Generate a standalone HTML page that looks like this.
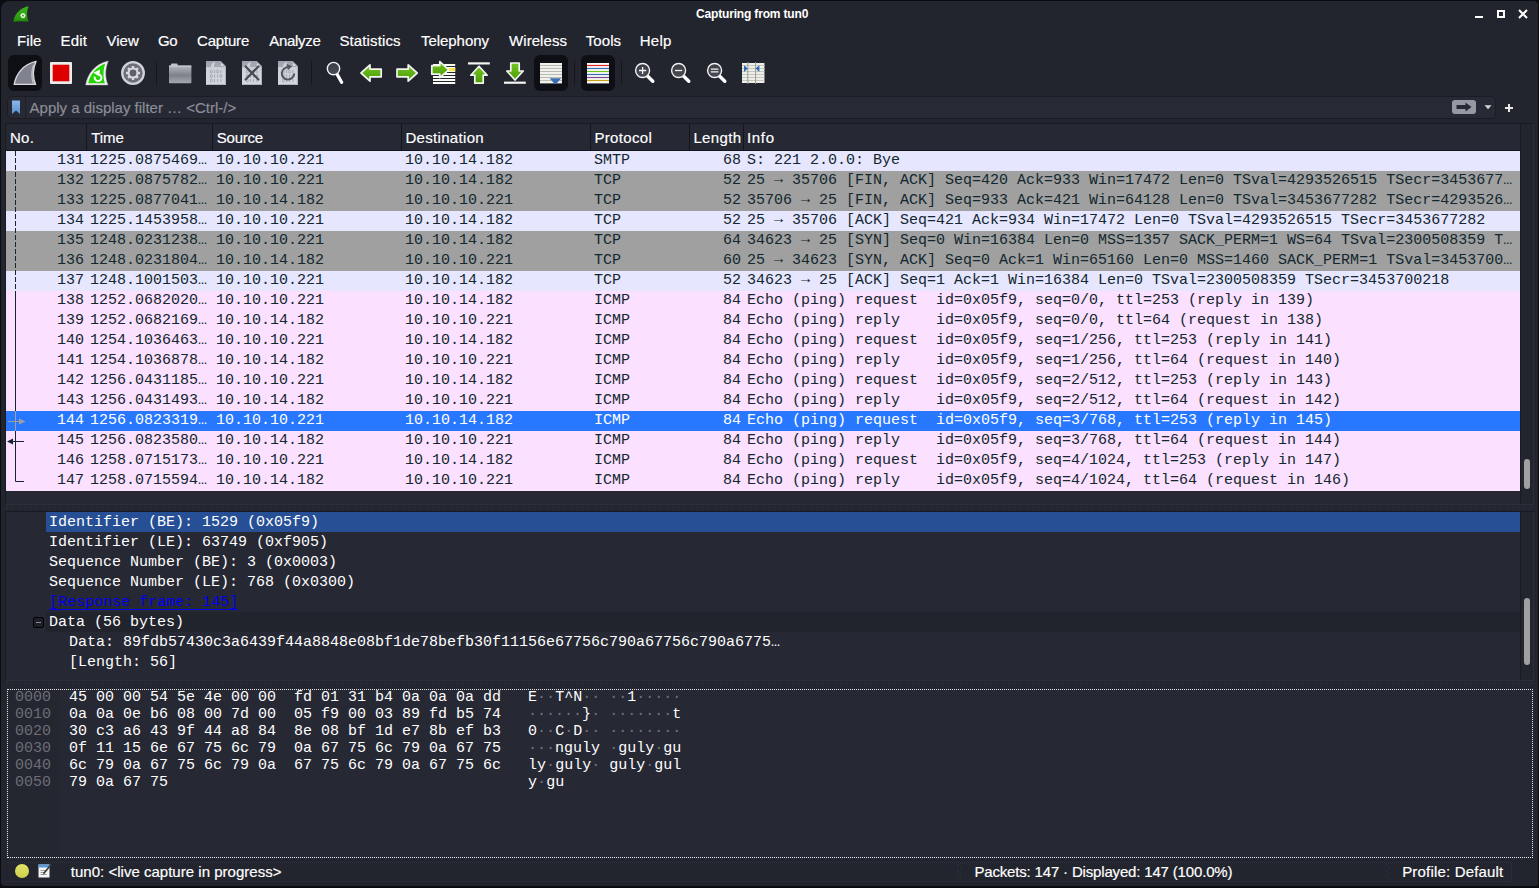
<!DOCTYPE html>
<html><head><meta charset="utf-8"><title>Capturing from tun0</title>
<style>
html,body{margin:0;padding:0;background:#0b0c10;}
body{width:1539px;height:888px;position:relative;overflow:hidden;font-family:"Liberation Sans",sans-serif;}
#win{position:absolute;left:1px;top:1px;width:1536.5px;height:885px;background:#23252e;border-radius:8px 4px 2px 4px;}
.abs{position:absolute;}
#title{-webkit-text-stroke:0 !important;}
.st{position:absolute;white-space:pre;line-height:20px;height:20px;-webkit-text-stroke:0.18px currentColor;}
.mono{font-family:"Liberation Mono",monospace;font-size:15px;white-space:pre;}
/* packet list */
#plist{position:absolute;left:6px;top:124px;width:1514px;height:381px;background:#262834;}
.row{position:absolute;left:6px;width:1514px;height:20px;line-height:20px;font-family:"Liberation Mono",monospace;font-size:15px;white-space:pre;color:#12272e;}
.row .c{position:absolute;top:0;}
.row .no{left:0;width:78px;text-align:right;}
.row .len{left:684px;width:51px;text-align:right;}
.ar{font-weight:normal;position:relative;top:-1px;}
.tcp{background:#e7e6ff;}
.gray{background:#a0a0a0;}
.icmp{background:#fce0ff;}
.sel{background:#2777ff;color:#ffffff;}
.drow{position:absolute;left:46px;width:1471px;padding-left:3px;height:20px;line-height:22px;font-family:"Liberation Mono",monospace;font-size:15px;white-space:pre;color:#ffffff;}
.hrow{position:absolute;left:0;height:17px;line-height:17px;font-family:"Liberation Mono",monospace;font-size:15px;white-space:pre;color:#ffffff;}
.hrow i{font-style:normal;color:#70727b;}
.sep{position:absolute;top:61px;width:1px;height:24px;background:#15161c;}
.pressed{position:absolute;top:55px;width:34px;height:36px;border-radius:6px;background:#0e0f14;}
</style></head><body>
<div id="win"></div>

<!-- title bar -->
<svg class="abs" style="left:13px;top:6px" width="17" height="17" viewBox="0 0 17 17">
 <defs><linearGradient id="fing" x1="0" y1="0" x2="0" y2="1"><stop offset="0" stop-color="#3cb418"/><stop offset="0.8" stop-color="#2c9a10"/><stop offset="1" stop-color="#1d7a08"/></linearGradient></defs>
 <path d="M0.3 15.8 C1.5 8 7 2 15.6 0.3 C13.5 5 13.5 11 15.6 15.8 Q8 14.6 0.3 15.8 Z" fill="url(#fing)"/>
 <g fill="#eaf6e4"><circle cx="10" cy="7.9" r="1"/><circle cx="10" cy="11.3" r="1"/><circle cx="8.3" cy="9.6" r="1"/><circle cx="11.7" cy="9.6" r="1"/><circle cx="8.8" cy="8.4" r="0.9"/><circle cx="11.2" cy="8.4" r="0.9"/><circle cx="8.8" cy="10.8" r="0.9"/><circle cx="11.2" cy="10.8" r="0.9"/></g>
 <circle cx="10" cy="9.6" r="0.8" fill="#3a9a20"/>
</svg>
<!-- window buttons -->
<div class="abs" style="left:1475px;top:16px;width:8px;height:2px;background:#fff"></div>
<div class="abs" style="left:1497px;top:10px;width:4px;height:4px;border:2px solid #fff"></div>
<svg class="abs" style="left:1518px;top:9px" width="10" height="10" viewBox="0 0 10 10"><path d="M1 1 L9 9 M9 1 L1 9" stroke="#fff" stroke-width="2" fill="none"/></svg>


<!-- toolbar -->
<div class="pressed" style="left:8px"></div>
<div class="pressed" style="left:534px"></div>
<div class="pressed" style="left:581px"></div>
<div class="sep" style="left:156px"></div>
<div class="sep" style="left:311px"></div>
<div class="sep" style="left:574px"></div>
<div class="sep" style="left:621px"></div>
<svg class="abs" style="left:0;top:52px" width="780" height="44" viewBox="0 52 780 44">
<defs>
 <linearGradient id="gArrow" x1="0" y1="0" x2="0" y2="1"><stop offset="0" stop-color="#74c422"/><stop offset="1" stop-color="#4a9c06"/></linearGradient>
 <linearGradient id="gFolder" x1="0" y1="0" x2="0" y2="1"><stop offset="0" stop-color="#b8bbc4"/><stop offset="0.12" stop-color="#a9acb5"/><stop offset="0.55" stop-color="#7e818a"/><stop offset="1" stop-color="#a6a9b2"/></linearGradient>
 <linearGradient id="gDoc" x1="0" y1="0" x2="0" y2="1"><stop offset="0" stop-color="#b4b7c0"/><stop offset="0.3" stop-color="#cdd0d7"/><stop offset="1" stop-color="#d6d8de"/></linearGradient>
 <linearGradient id="gLens" x1="0" y1="0" x2="0" y2="1"><stop offset="0" stop-color="#3a3c46"/><stop offset="1" stop-color="#4a4c56"/></linearGradient>
 <g id="doc">
  <path d="M0 0 H14.5 L20 5.5 V24 H0 Z" fill="url(#gDoc)"/>
  <path d="M0 0 H14.5 L20 5.5 V6 H0 Z" fill="#9a9da7" opacity="0.75"/>
  <path d="M14.5 0 L20 5.5 H14.5 Z" fill="#a9acb5"/><path d="M15.2 2.2 L17.8 4.8 H15.2 Z" fill="#eeeff2"/><path d="M19.5 6 V23.5 H0.5" stroke="#a6a9b2" stroke-width="1" fill="none" opacity="0.8"/>
  <path d="M5 6 Q5 1.5 9.5 1 Q7.5 3 8 6 Z" fill="#cfd1d8"/>
  <g fill="none" stroke="#9fa2ab" stroke-width="0.9">
   <ellipse cx="5.3" cy="10.6" rx="1" ry="1.5"/><path d="M8.6 9 V12.2"/><ellipse cx="11.6" cy="10.6" rx="1" ry="1.5"/><path d="M14.9 9 V12.2"/>
   <ellipse cx="5.3" cy="15.1" rx="1" ry="1.5"/><path d="M8.6 13.5 V16.7 M11.6 13.5 V16.7"/><ellipse cx="14.9" cy="15.1" rx="1" ry="1.5"/>
   <ellipse cx="5.3" cy="19.6" rx="1" ry="1.5"/><path d="M8.6 18 V21.2 M11.6 18 V21.2 M14.9 18 V21.2"/>
  </g>
 </g>
 <g id="mag">
  <path d="M4.6 5.2 L10.2 10.8" stroke="#ffffff" stroke-width="3.4" stroke-linecap="round"/>
  <circle cx="0" cy="0" r="7" fill="url(#gLens)" stroke="#f2f2f2" stroke-width="1.4"/>
 </g>
</defs>
<!-- shark fin (start) -->
<path d="M14.2 84.4 C16 74.5 22.5 64.5 36 61.4 C32.8 68.5 32.6 77 35.6 84.4 Z" fill="#80838f" stroke="#dadbe0" stroke-width="1.4" stroke-linejoin="round"/>
<path d="M33.4 65 C31.3 71 31.3 77.5 33.2 83.6" stroke="#d2d3d9" stroke-width="0.9" fill="none"/><path d="M33.4 65 C31.3 71 31.3 77.5 33.2 83.6 L34.8 83.6 C32.4 77 32.6 70 35 63 Z" fill="#c0c2c9" opacity="0.6"/>
<!-- stop -->
<rect x="50" y="62" width="22" height="22" rx="1" fill="#ececec"/>
<rect x="52.7" y="64.7" width="16.6" height="16.6" fill="#dc0000"/>
<!-- restart fin -->
<path d="M85.7 84.9 C87.5 74.5 94.4 64 108.3 61 C105 68.5 104.8 77.5 107.9 84.9 Z" fill="#f2f2f2" stroke="#b9bbc0" stroke-width="0.5" stroke-linejoin="round"/>
<path d="M88.2 83.2 C90.2 75 95.6 67.2 105.3 63.6 C103.1 69.6 102.9 77.4 104.9 83.2 Z" fill="#22d400"/>
<path d="M99.3 74.5 A3.4 3.4 0 1 1 94.8 76.6" stroke="#f8fcf6" stroke-width="2" fill="none"/>
<path d="M93.2 72.8 L100 69.6 L99.4 76.4 Z" fill="#f8fcf6"/>
<!-- options gear -->
<circle cx="133" cy="73" r="10.8" fill="#6c6f79" stroke="#d0d2d8" stroke-width="2.3"/>
<g transform="translate(133 73)" fill="#d9dade">
 <circle r="5.5"/>
 <g id="teeth"><rect x="-1.2" y="-7" width="2.4" height="2.4"/><rect x="-1.2" y="4.6" width="2.4" height="2.4"/></g>
 <use href="#teeth" transform="rotate(45)"/><use href="#teeth" transform="rotate(90)"/><use href="#teeth" transform="rotate(135)"/>
 <circle r="3.4" fill="#5c5f69"/>
</g>
<!-- open folder -->
<path d="M171 66 V64.6 Q171 63.6 172 63.6 H176.6 Q177.4 63.6 177.6 64.4 L178 66 Z" fill="#c2c4cc"/>
<rect x="169" y="65.6" width="22.4" height="17.6" rx="0.8" fill="url(#gFolder)"/>
<rect x="169" y="65.6" width="22.4" height="1.2" fill="#c6c8cf"/>
<!-- docs -->
<use href="#doc" x="206" y="61"/>
<use href="#doc" x="242" y="61"/>
<path d="M245.6 66.4 L258.4 79.6 M258.4 66.4 L245.6 79.6" stroke="#474a54" stroke-width="2.1" stroke-linecap="round"/>
<use href="#doc" x="278" y="61"/>
<path d="M288.6 67.2 A6.2 6.2 0 1 0 294.2 73.4" stroke="#545761" stroke-width="2" fill="none"/>
<path d="M286.8 64 L292.2 66.2 L287.8 70.2 Z" fill="#545761"/>
<!-- find -->
<path d="M337.4 74.8 L341.6 82.2" stroke="#ffffff" stroke-width="3.3" stroke-linecap="round"/><circle cx="333.5" cy="68.6" r="6.2" fill="url(#gLens)" stroke="#f2f2f2" stroke-width="1.4"/>
<!-- back / forward -->
<path d="M361 73 L370 64.8 V69.2 H381.2 V76.8 H370 V81.2 Z" fill="url(#gArrow)" stroke="#f4f4f0" stroke-width="1.7" stroke-linejoin="round"/>
<path d="M417.2 73 L408.2 64.8 V69.2 H397 V76.8 H408.2 V81.2 Z" fill="url(#gArrow)" stroke="#f4f4f0" stroke-width="1.7" stroke-linejoin="round"/>
<!-- go to packet -->
<g fill="#fbfbf8">
 <rect x="433" y="64" width="22.2" height="2"/><rect x="433" y="67" width="22.2" height="5"/><rect x="433" y="73" width="22.2" height="2"/>
 <rect x="433" y="76" width="22.2" height="2"/><rect x="433" y="79" width="22.2" height="2"/><rect x="433" y="82" width="22.2" height="2"/>
</g>
<rect x="447" y="68" width="8.2" height="3.2" fill="#fce348"/>
<path d="M431.8 65.6 H439.8 V61.6 L448.8 69.8 L439.8 77.6 V74.2 H431.8 Z" fill="url(#gArrow)" stroke="#f4f4f0" stroke-width="1.7" stroke-linejoin="round"/>
<!-- first packet -->
<rect x="468" y="62.3" width="21.8" height="2.2" fill="#f4f4f0"/>
<path d="M479 66.2 L487.2 75.2 H483.2 V83.2 H474.8 V75.2 H470.8 Z" fill="url(#gArrow)" stroke="#f4f4f0" stroke-width="1.7" stroke-linejoin="round"/>
<!-- last packet -->
<rect x="504" y="81.6" width="21.8" height="2.2" fill="#f4f4f0"/>
<path d="M515 80 L523.2 71 H519.2 V63 H510.8 V71 H506.8 Z" fill="url(#gArrow)" stroke="#f4f4f0" stroke-width="1.7" stroke-linejoin="round"/>
<!-- autoscroll -->
<rect x="540" y="63" width="22" height="20.4" fill="#f1f1ec"/>
<path d="M540 65.5 H562 M540 68.5 H562 M540 71.5 H562 M540 74.5 H562 M540 77.5 H562 M540 80.5 H562" stroke="#b9bab2" stroke-width="1"/>
<path d="M549.6 78.3 H561.2 L556.8 83.3 Q555.4 84.5 554 83.3 Z" fill="#3a6cb4"/>
<!-- colorize -->
<rect x="587" y="63" width="22" height="20.4" fill="#fbfbfa"/>
<path d="M587 65.5 H609" stroke="#e02828" stroke-width="1.2"/>
<path d="M587 68.5 H609" stroke="#3a6cb4" stroke-width="1.2"/>
<path d="M587 71.5 H609" stroke="#72c020" stroke-width="1.2"/>
<path d="M587 74.5 H609" stroke="#3a6cb4" stroke-width="1.2"/>
<path d="M587 77.5 H609" stroke="#7a4a8c" stroke-width="1.2"/>
<path d="M587 80.5 H609" stroke="#c8a010" stroke-width="1.2"/>
<!-- zoom in/out/100 -->
<g transform="translate(642.6 70.5)"><use href="#mag"/><path d="M-3.6 0 H3.6 M0 -3.6 V3.6" stroke="#f4f4f4" stroke-width="1.3"/></g>
<g transform="translate(678.6 70.5)"><use href="#mag"/><path d="M-3.6 0 H3.6" stroke="#f4f4f4" stroke-width="1.3"/></g>
<g transform="translate(714.6 70.5)"><use href="#mag"/><path d="M-3.8 -1.4 H3.8 M-3.8 1.4 H3.8" stroke="#f4f4f4" stroke-width="1.1"/></g>
<!-- resize columns -->
<rect x="742" y="63" width="22.4" height="20" fill="#efefea"/>
<path d="M742 65.5 H764.4 M742 68.5 H764.4 M742 71.5 H764.4 M742 74.5 H764.4 M742 77.5 H764.4 M742 80.5 H764.4" stroke="#c4c5bd" stroke-width="1"/>
<path d="M747.8 62 V84 M755.6 62 V84" stroke="#9a9b93" stroke-width="1"/>
<path d="M744 65.2 L747.8 68.6 L744 72 Z" fill="#2f6ab8"/>
<path d="M759.4 65.2 L755.6 68.6 L759.4 72 Z" fill="#2f6ab8"/>
</svg>


<!-- filter bar -->
<div class="abs" style="left:7px;top:96px;width:1487px;height:21px;background:#272935;border:1px solid #1b1c24;border-radius:5px"></div>
<div class="abs" style="left:25px;top:97px;width:1px;height:21px;background:#1f2029"></div>
<svg class="abs" style="left:11px;top:100px" width="10" height="15" viewBox="0 0 10 15">
 <defs><linearGradient id="bmk" x1="0" y1="0" x2="0" y2="1"><stop offset="0" stop-color="#8db8ea"/><stop offset="1" stop-color="#5a90d0"/></linearGradient></defs>
 <path d="M1 0.5 H9 V14 L5 10.5 L1 14 Z" fill="url(#bmk)"/></svg>
<div class="abs" style="left:1452px;top:100px;width:24px;height:14px;border-radius:3px;background:#9698a2"></div>
<svg class="abs" style="left:1455px;top:101px" width="18" height="12" viewBox="0 0 18 12"><path d="M1.5 4 H10.5 V1.5 L16.5 6 L10.5 10.5 V8 H1.5 Z" fill="#262834"/></svg>
<svg class="abs" style="left:1484px;top:105px" width="8" height="5" viewBox="0 0 8 5"><path d="M0.5 0.3 H7.5 L4 4.3 Z" fill="#d6d6cf"/></svg>
<div class="abs" style="left:1505px;top:107px;width:8px;height:2px;background:#e8e8e8"></div>
<div class="abs" style="left:1508px;top:104px;width:2px;height:8px;background:#e8e8e8"></div>

<!-- packet list frame -->
<div class="abs" style="left:5px;top:123px;width:1529px;height:382px;background:#1a1b22"></div><div class="abs" style="left:6px;top:504px;width:1528px;height:1px;background:#2c2e3b"></div><div class="abs" style="left:1533px;top:124px;width:1px;height:381px;background:#2c2e3b"></div>
<div class="abs" style="left:6px;top:124px;width:1514px;height:380px;background:#262834"></div>
<div class="abs" style="left:1521px;top:124px;width:12px;height:380px;background:#23252e"></div>
<div class="abs" style="left:6px;top:150px;width:1514px;height:1px;background:#15161c"></div>
<div class="abs" style="left:86px;top:124px;width:1px;height:26px;background:#15161c"></div>
<div class="abs" style="left:212px;top:124px;width:1px;height:26px;background:#15161c"></div>
<div class="abs" style="left:401px;top:124px;width:1px;height:26px;background:#15161c"></div>
<div class="abs" style="left:590px;top:124px;width:1px;height:26px;background:#15161c"></div>
<div class="abs" style="left:689px;top:124px;width:1px;height:26px;background:#15161c"></div>
<div class="abs" style="left:743px;top:124px;width:1px;height:26px;background:#15161c"></div>
<div class="row tcp" style="top:151px"><span class="c no">131</span><span class="c" style="left:84px">1225.0875469…</span><span class="c" style="left:210px">10.10.10.221</span><span class="c" style="left:399px">10.10.14.182</span><span class="c" style="left:588px">SMTP</span><span class="c len">68</span><span class="c" style="left:741px">S: 221 2.0.0: Bye</span></div>
<div class="row gray" style="top:171px"><span class="c no">132</span><span class="c" style="left:84px">1225.0875782…</span><span class="c" style="left:210px">10.10.10.221</span><span class="c" style="left:399px">10.10.14.182</span><span class="c" style="left:588px">TCP</span><span class="c len">52</span><span class="c" style="left:741px">25 <b class="ar">→</b> 35706 [FIN, ACK] Seq=420 Ack=933 Win=17472 Len=0 TSval=4293526515 TSecr=3453677…</span></div>
<div class="row gray" style="top:191px"><span class="c no">133</span><span class="c" style="left:84px">1225.0877041…</span><span class="c" style="left:210px">10.10.14.182</span><span class="c" style="left:399px">10.10.10.221</span><span class="c" style="left:588px">TCP</span><span class="c len">52</span><span class="c" style="left:741px">35706 <b class="ar">→</b> 25 [FIN, ACK] Seq=933 Ack=421 Win=64128 Len=0 TSval=3453677282 TSecr=4293526…</span></div>
<div class="row tcp" style="top:211px"><span class="c no">134</span><span class="c" style="left:84px">1225.1453958…</span><span class="c" style="left:210px">10.10.10.221</span><span class="c" style="left:399px">10.10.14.182</span><span class="c" style="left:588px">TCP</span><span class="c len">52</span><span class="c" style="left:741px">25 <b class="ar">→</b> 35706 [ACK] Seq=421 Ack=934 Win=17472 Len=0 TSval=4293526515 TSecr=3453677282</span></div>
<div class="row gray" style="top:231px"><span class="c no">135</span><span class="c" style="left:84px">1248.0231238…</span><span class="c" style="left:210px">10.10.10.221</span><span class="c" style="left:399px">10.10.14.182</span><span class="c" style="left:588px">TCP</span><span class="c len">64</span><span class="c" style="left:741px">34623 <b class="ar">→</b> 25 [SYN] Seq=0 Win=16384 Len=0 MSS=1357 SACK_PERM=1 WS=64 TSval=2300508359 T…</span></div>
<div class="row gray" style="top:251px"><span class="c no">136</span><span class="c" style="left:84px">1248.0231804…</span><span class="c" style="left:210px">10.10.14.182</span><span class="c" style="left:399px">10.10.10.221</span><span class="c" style="left:588px">TCP</span><span class="c len">60</span><span class="c" style="left:741px">25 <b class="ar">→</b> 34623 [SYN, ACK] Seq=0 Ack=1 Win=65160 Len=0 MSS=1460 SACK_PERM=1 TSval=3453700…</span></div>
<div class="row tcp" style="top:271px"><span class="c no">137</span><span class="c" style="left:84px">1248.1001503…</span><span class="c" style="left:210px">10.10.10.221</span><span class="c" style="left:399px">10.10.14.182</span><span class="c" style="left:588px">TCP</span><span class="c len">52</span><span class="c" style="left:741px">34623 <b class="ar">→</b> 25 [ACK] Seq=1 Ack=1 Win=16384 Len=0 TSval=2300508359 TSecr=3453700218</span></div>
<div class="row icmp" style="top:291px"><span class="c no">138</span><span class="c" style="left:84px">1252.0682020…</span><span class="c" style="left:210px">10.10.10.221</span><span class="c" style="left:399px">10.10.14.182</span><span class="c" style="left:588px">ICMP</span><span class="c len">84</span><span class="c" style="left:741px">Echo (ping) request  id=0x05f9, seq=0/0, ttl=253 (reply in 139)</span></div>
<div class="row icmp" style="top:311px"><span class="c no">139</span><span class="c" style="left:84px">1252.0682169…</span><span class="c" style="left:210px">10.10.14.182</span><span class="c" style="left:399px">10.10.10.221</span><span class="c" style="left:588px">ICMP</span><span class="c len">84</span><span class="c" style="left:741px">Echo (ping) reply    id=0x05f9, seq=0/0, ttl=64 (request in 138)</span></div>
<div class="row icmp" style="top:331px"><span class="c no">140</span><span class="c" style="left:84px">1254.1036463…</span><span class="c" style="left:210px">10.10.10.221</span><span class="c" style="left:399px">10.10.14.182</span><span class="c" style="left:588px">ICMP</span><span class="c len">84</span><span class="c" style="left:741px">Echo (ping) request  id=0x05f9, seq=1/256, ttl=253 (reply in 141)</span></div>
<div class="row icmp" style="top:351px"><span class="c no">141</span><span class="c" style="left:84px">1254.1036878…</span><span class="c" style="left:210px">10.10.14.182</span><span class="c" style="left:399px">10.10.10.221</span><span class="c" style="left:588px">ICMP</span><span class="c len">84</span><span class="c" style="left:741px">Echo (ping) reply    id=0x05f9, seq=1/256, ttl=64 (request in 140)</span></div>
<div class="row icmp" style="top:371px"><span class="c no">142</span><span class="c" style="left:84px">1256.0431185…</span><span class="c" style="left:210px">10.10.10.221</span><span class="c" style="left:399px">10.10.14.182</span><span class="c" style="left:588px">ICMP</span><span class="c len">84</span><span class="c" style="left:741px">Echo (ping) request  id=0x05f9, seq=2/512, ttl=253 (reply in 143)</span></div>
<div class="row icmp" style="top:391px"><span class="c no">143</span><span class="c" style="left:84px">1256.0431493…</span><span class="c" style="left:210px">10.10.14.182</span><span class="c" style="left:399px">10.10.10.221</span><span class="c" style="left:588px">ICMP</span><span class="c len">84</span><span class="c" style="left:741px">Echo (ping) reply    id=0x05f9, seq=2/512, ttl=64 (request in 142)</span></div>
<div class="row sel" style="top:411px"><span class="c no">144</span><span class="c" style="left:84px">1256.0823319…</span><span class="c" style="left:210px">10.10.10.221</span><span class="c" style="left:399px">10.10.14.182</span><span class="c" style="left:588px">ICMP</span><span class="c len">84</span><span class="c" style="left:741px">Echo (ping) request  id=0x05f9, seq=3/768, ttl=253 (reply in 145)</span></div>
<div class="row icmp" style="top:431px"><span class="c no">145</span><span class="c" style="left:84px">1256.0823580…</span><span class="c" style="left:210px">10.10.14.182</span><span class="c" style="left:399px">10.10.10.221</span><span class="c" style="left:588px">ICMP</span><span class="c len">84</span><span class="c" style="left:741px">Echo (ping) reply    id=0x05f9, seq=3/768, ttl=64 (request in 144)</span></div>
<div class="row icmp" style="top:451px"><span class="c no">146</span><span class="c" style="left:84px">1258.0715173…</span><span class="c" style="left:210px">10.10.10.221</span><span class="c" style="left:399px">10.10.14.182</span><span class="c" style="left:588px">ICMP</span><span class="c len">84</span><span class="c" style="left:741px">Echo (ping) request  id=0x05f9, seq=4/1024, ttl=253 (reply in 147)</span></div>
<div class="row icmp" style="top:471px"><span class="c no">147</span><span class="c" style="left:84px">1258.0715594…</span><span class="c" style="left:210px">10.10.14.182</span><span class="c" style="left:399px">10.10.10.221</span><span class="c" style="left:588px">ICMP</span><span class="c len">84</span><span class="c" style="left:741px">Echo (ping) reply    id=0x05f9, seq=4/1024, ttl=64 (request in 146)</span></div>
<!-- related-packet markers -->
<svg class="abs" style="left:6px;top:151px" width="24" height="340" viewBox="0 0 24 340">
 <path d="M9.5 0 V140" stroke="#12272e" stroke-width="1" stroke-dasharray="5 2" fill="none"/>
 <path d="M9.5 140 V260 M9.5 280 V330.5 H18" stroke="#12272e" stroke-width="1" fill="none"/>
 <path d="M9.5 260 V280 M2 270.5 H14" stroke="#a0a0a0" stroke-width="1" fill="none"/>
 <path d="M13 267.5 L19.5 270.5 L13 273.5 Z" fill="#a0a0a0"/>
 <path d="M6 290.5 H18" stroke="#12272e" stroke-width="1" fill="none"/>
 <path d="M7 287.5 L1 290.5 L7 293.5 Z" fill="#12272e"/>
</svg>
<div class="abs" style="left:1524px;top:459px;width:6px;height:30px;border-radius:3px;background:#a0a0a0"></div>

<!-- splitters -->
<svg class="abs" style="left:6px;top:505px" width="1528" height="6"><defs><pattern id="spl" width="6" height="6" patternUnits="userSpaceOnUse"><rect x="0" y="1" width="1" height="1" fill="#30323f"/><rect x="1" y="2" width="1" height="1" fill="#30323f"/><rect x="0" y="4" width="1" height="1" fill="#30323f"/><rect x="3" y="2" width="1" height="1" fill="#2c2e3a"/><rect x="4" y="3" width="1" height="1" fill="#2c2e3a"/></pattern></defs><rect width="1528" height="6" fill="url(#spl)"/></svg>
<svg class="abs" style="left:6px;top:681px" width="1528" height="6"><rect width="1528" height="6" fill="url(#spl)"/></svg>

<!-- details pane -->
<div class="abs" style="left:5px;top:511px;width:1529px;height:170px;background:#1a1b22"></div><div class="abs" style="left:6px;top:680px;width:1528px;height:1px;background:#2c2e3b"></div><div class="abs" style="left:1533px;top:512px;width:1px;height:169px;background:#2c2e3b"></div>
<div class="abs" style="left:6px;top:512px;width:1514px;height:168px;background:#262834"></div>
<div class="abs" style="left:1521px;top:512px;width:12px;height:168px;background:#23252e"></div>
<div class="drow" style="top:512px;background:#264f96">Identifier (BE): 1529 (0x05f9)</div>
<div class="drow" style="top:532px">Identifier (LE): 63749 (0xf905)</div>
<div class="drow" style="top:552px">Sequence Number (BE): 3 (0x0003)</div>
<div class="drow" style="top:572px">Sequence Number (LE): 768 (0x0300)</div>
<div class="drow" style="top:592px;color:#0000ee"><span style="text-decoration:underline;text-underline-offset:3px;text-decoration-thickness:1px">[Response frame: 145]</span></div>
<div class="drow" style="top:612px;background:#22242d">Data (56 bytes)</div>
<div class="drow" style="top:632px"><span style="padding-left:20px"></span>Data: 89fdb57430c3a6439f44a8848e08bf1de78befb30f11156e67756c790a67756c790a6775…</div>
<div class="drow" style="top:652px"><span style="padding-left:20px"></span>[Length: 56]</div>
<div class="abs" style="left:33px;top:617px;width:9px;height:9px;border:1px solid #000;border-radius:2px;background:#1e2028"></div>
<div class="abs" style="left:36px;top:622px;width:5px;height:1px;background:#8a8c95"></div>
<div class="abs" style="left:1524px;top:598px;width:6px;height:67px;border-radius:3px;background:#a0a0a0"></div>

<!-- hex pane -->
<div class="abs" style="left:6px;top:688px;width:1528px;height:171px;background:#262834"></div>
<div class="abs" style="left:7px;top:689px;width:53px;height:169px;background:#242630"></div>
<div class="abs" style="left:7px;top:689px;width:1524px;height:167px;border:1px dotted #e8e8e8"></div>
<div class="abs" style="left:15px;top:689px;width:1500px;height:110px">
<div class="hrow" style="top:0px"><span style="color:#6c6e77">0000</span>  45 00 00 54 5e 4e 00 00  fd 01 31 b4 0a 0a 0a dd   E<i>··</i>T^N<i>··</i> <i>··</i>1<i>·····</i></div>
<div class="hrow" style="top:17px"><span style="color:#6c6e77">0010</span>  0a 0a 0e b6 08 00 7d 00  05 f9 00 03 89 fd b5 74   <i>······</i>}<i>·</i> <i>·······</i>t</div>
<div class="hrow" style="top:34px"><span style="color:#6c6e77">0020</span>  30 c3 a6 43 9f 44 a8 84  8e 08 bf 1d e7 8b ef b3   0<i>··</i>C<i>·</i>D<i>··</i> <i>········</i></div>
<div class="hrow" style="top:51px"><span style="color:#6c6e77">0030</span>  0f 11 15 6e 67 75 6c 79  0a 67 75 6c 79 0a 67 75   <i>···</i>nguly <i>·</i>guly<i>·</i>gu</div>
<div class="hrow" style="top:68px"><span style="color:#6c6e77">0040</span>  6c 79 0a 67 75 6c 79 0a  67 75 6c 79 0a 67 75 6c   ly<i>·</i>guly<i>·</i> guly<i>·</i>gul</div>
<div class="hrow" style="top:85px"><span style="color:#6c6e77">0050</span>  79 0a 67 75                                        y<i>·</i>gu</div>
</div>

<!-- status bar -->
<div class="abs" style="left:15.2px;top:864.1px;width:13.6px;height:13.6px;border-radius:7px;background:linear-gradient(#e2e264,#cfcf50)"></div>
<svg class="abs" style="left:38px;top:863px" width="14" height="16" viewBox="0 0 14 16">
 <rect x="0.5" y="1.5" width="11" height="13" fill="#f4f4f4"/>
 <rect x="0.5" y="1.5" width="11" height="3" fill="#5a9ad8"/>
 <path d="M2.5 7.5 H8 M2.5 9.5 H7 M2.5 11.5 H8.5" stroke="#9a9a9a" stroke-width="1"/>
 <path d="M12.5 1 L5.5 9.5 L4.8 11.5 L6.8 10.6 L13.8 2 Z" fill="#3a3a3a"/>
</svg>
<div class="abs" style="left:6px;top:862px;width:1505px;height:1px;background:#292b36"></div>
<div class="abs" style="left:6px;top:881px;width:1505px;height:1px;background:#2a2c38"></div>
<div class="abs" style="left:6px;top:862px;width:1px;height:19px;background:#1f2028"></div>
<div class="abs" style="left:1511px;top:862px;width:1px;height:20px;background:#292b36"></div>
<svg class="abs" style="left:957px;top:863px" width="5" height="18"><defs><pattern id="spv" width="5" height="6" patternUnits="userSpaceOnUse"><rect x="0" y="1" width="1" height="1" fill="#30323f"/><rect x="1" y="2" width="1" height="1" fill="#30323f"/><rect x="3" y="0" width="1" height="1" fill="#30323f"/><rect x="3" y="4" width="1" height="1" fill="#2c2e3a"/></pattern></defs><rect width="5" height="18" fill="url(#spv)"/></svg>
<svg class="abs" style="left:1385px;top:863px" width="5" height="18"><rect width="5" height="18" fill="url(#spv)"/></svg>
<div id="title" class="st" style="left:696.00px;top:4.03px;font-size:12px;font-weight:bold;color:#ffffff;letter-spacing:-0.167px">Capturing from tun0</div>
<div id="m1" class="st" style="left:17.00px;top:31.04px;font-size:15px;font-weight:normal;color:#ffffff;letter-spacing:0.067px">File</div>
<div id="m2" class="st" style="left:60.60px;top:31.04px;font-size:15px;font-weight:normal;color:#ffffff;letter-spacing:0.167px">Edit</div>
<div id="m3" class="st" style="left:106.60px;top:31.04px;font-size:15px;font-weight:normal;color:#ffffff;letter-spacing:-0.033px">View</div>
<div id="m4" class="st" style="left:158.00px;top:31.04px;font-size:15px;font-weight:normal;color:#ffffff;letter-spacing:-0.300px">Go</div>
<div id="m5" class="st" style="left:197.00px;top:31.04px;font-size:15px;font-weight:normal;color:#ffffff;letter-spacing:-0.183px">Capture</div>
<div id="m6" class="st" style="left:269.20px;top:31.04px;font-size:15px;font-weight:normal;color:#ffffff;letter-spacing:-0.300px">Analyze</div>
<div id="m7" class="st" style="left:339.40px;top:31.04px;font-size:15px;font-weight:normal;color:#ffffff;letter-spacing:0.133px">Statistics</div>
<div id="m8" class="st" style="left:421.00px;top:31.04px;font-size:15px;font-weight:normal;color:#ffffff;letter-spacing:-0.050px">Telephony</div>
<div id="m9" class="st" style="left:509.00px;top:31.04px;font-size:15px;font-weight:normal;color:#ffffff;letter-spacing:0.071px">Wireless</div>
<div id="m10" class="st" style="left:585.80px;top:31.04px;font-size:15px;font-weight:normal;color:#ffffff;letter-spacing:0.075px">Tools</div>
<div id="m11" class="st" style="left:639.80px;top:31.04px;font-size:15px;font-weight:normal;color:#ffffff;letter-spacing:0.233px">Help</div>
<div id="flt" class="st" style="left:29.60px;top:98.04px;font-size:15px;font-weight:normal;color:#8c8e97;letter-spacing:-0.003px">Apply a display filter … &lt;Ctrl-/&gt;</div>
<div id="h1" class="st" style="left:10.00px;top:128.04px;font-size:15px;font-weight:normal;color:#ffffff;letter-spacing:0.250px">No.</div>
<div id="h2" class="st" style="left:91.30px;top:128.04px;font-size:15px;font-weight:normal;color:#ffffff;letter-spacing:-0.067px">Time</div>
<div id="h3" class="st" style="left:216.80px;top:128.04px;font-size:15px;font-weight:normal;color:#ffffff;letter-spacing:-0.240px">Source</div>
<div id="h4" class="st" style="left:405.40px;top:128.04px;font-size:15px;font-weight:normal;color:#ffffff;letter-spacing:0.320px">Destination</div>
<div id="h5" class="st" style="left:594.40px;top:128.04px;font-size:15px;font-weight:normal;color:#ffffff;letter-spacing:0.329px">Protocol</div>
<div id="h6" class="st" style="left:693.40px;top:128.04px;font-size:15px;font-weight:normal;color:#ffffff;letter-spacing:0.360px">Length</div>
<div id="h7" class="st" style="left:747.00px;top:128.04px;font-size:15px;font-weight:normal;color:#ffffff;letter-spacing:0.667px">Info</div>
<div id="s1" class="st" style="left:70.80px;top:862.04px;font-size:15px;font-weight:normal;color:#ffffff;letter-spacing:0.016px">tun0: &lt;live capture in progress&gt;</div>
<div id="s2" class="st" style="left:974.40px;top:862.04px;font-size:15px;font-weight:normal;color:#ffffff;letter-spacing:-0.168px">Packets: 147 · Displayed: 147 (100.0%)</div>
<div id="s3" class="st" style="left:1402.20px;top:862.04px;font-size:15px;font-weight:normal;color:#ffffff;letter-spacing:0.180px">Profile: Default</div>
</body></html>
